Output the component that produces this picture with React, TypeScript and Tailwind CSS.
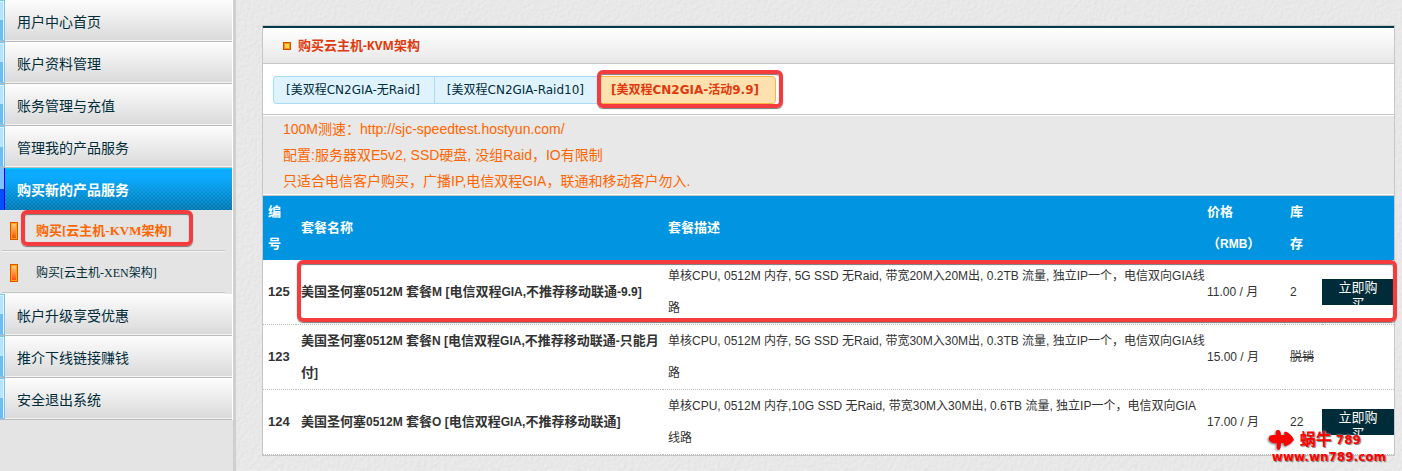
import React from 'react';

type Plan = {
  id: number;
  name: string;
  desc: string[];
  price: string;
  stock: number;
  marked?: boolean;
};

const plans: Plan[] = [
  {
    id: 125,
    name: '美国圣何塞0512M 套餐M [电信双程GIA,不推荐移动联通-9.9]',
    desc: ['单核CPU, 0512M 内存, 5G SSD 无Raid, 带宽20M入20M出, 0.2TB 流量, 独立IP一个，电信双向GIA线', '路'],
    price: '11.00 / 月',
    stock: 2,
    marked: true,
  },
  {
    id: 123,
    name: '美国圣何塞0512M 套餐N [电信双程GIA,不推荐移动联通-只能月付]',
    desc: ['单核CPU, 0512M 内存, 5G SSD 无Raid, 带宽30M入30M出, 0.3TB 流量, 独立IP一个，电信双向GIA线', '路'],
    price: '15.00 / 月',
    stock: 0,
  },
  {
    id: 124,
    name: '美国圣何塞0512M 套餐O [电信双程GIA,不推荐移动联通]',
    desc: ['单核CPU, 0512M 内存,10G SSD 无Raid, 带宽30M入30M出, 0.6TB 流量, 独立IP一个，电信双向GIA', '线路'],
    price: '17.00 / 月',
    stock: 22,
  },
];

const topMenu = ['用户中心首页', '账户资料管理', '账务管理与充值', '管理我的产品服务'];
const bottomMenu = ['帐户升级享受优惠', '推介下线链接赚钱', '安全退出系统'];

// bold titles set their latin parts one size below the chinese
const Mixed = ({ text }: { text: string }) => (
  <>
    {text.split(/([\x20-\x7e]+)/).map((part, i) =>
      i % 2 ? (
        <span key={i} className="text-xs leading-[inherit]">
          {part}
        </span>
      ) : (
        part
      )
    )}
  </>
);

const Marker = ({ className }: { className: string }) => (
  <span
    className={`absolute pointer-events-none border-4 border-[#f43b3d] rounded-md shadow-[0_1px_1px_#777,inset_0_1px_1px_#777] ${className}`}
  />
);

const MenuItem = ({ label }: { label: string }) => (
  <a
    href="#"
    className="flex h-[42px] border-b border-[#bababa] bg-linear-to-b from-[#fdfdfd] to-[#d9d9d9] text-sm text-[#012c3a]"
  >
    <span className="w-[5px] border-y border-r border-[#78c4f2] bg-linear-to-b from-[#b4e4ff] from-50% to-[#6dbdf0] to-50% shadow-[inset_-1px_1px_0_#dcf4ff]" />
    <span className="flex-1 pl-3 leading-[44px] border-b border-[#f4f4f4]">{label}</span>
  </a>
);

const SubItem = ({ label, active }: { label: string; active?: boolean }) => (
  <a
    href="#"
    className={`relative flex items-center h-[42px] pl-[10px] pb-px font-['Liberation_Serif','Noto_Sans_CJK_SC',serif] ${
      active ? 'text-[13px] font-bold text-[#ff6600]' : 'text-xs text-[#012c3a]'
    }`}
  >
    <span className="w-2 h-[18px] border border-[#f04a00] bg-linear-to-b from-[#ffd08a] via-[#ff9140] to-[#ff3c00] shadow-[inset_0_0_0_1px_#ffb000]" />
    <span className="pl-[18px] whitespace-nowrap">{label}</span>
    <span className="absolute left-[2px] right-[7px] bottom-0 h-[2px] border-t border-[#c6c6c6] bg-[#f6f6f6]" />
    {active && <Marker className="left-[21px] top-0 w-[172px] h-9" />}
  </a>
);

const Sidebar = () => (
  <nav className="w-[236px] shrink-0 bg-[#e4e4e4] border-r-[3px] border-[#cfcfcf]">
    <div className="border-r border-white">
      {topMenu.map((label) => (
        <MenuItem key={label} label={label} />
      ))}
      <a href="#" className="flex h-[42px] text-sm font-bold text-white">
        <span className="w-[5px] border-r border-[#0000ff] bg-linear-to-b from-[#7cc4ff] from-50% to-[#0050ff] to-50%" />
        <span className="flex-1 pl-3 leading-[42px] border-t border-[#00d2ff] bg-[linear-gradient(#0cabff_20%,#0cabff00),repeating-conic-gradient(#0670a6_0_25%,#0a8cc6_0_50%)] bg-[length:100%_100%,4px_4px]">
          购买新的产品服务
        </span>
      </a>
      <SubItem label="购买[云主机-KVM架构]" active />
      <SubItem label="购买[云主机-XEN架构]" />
      {bottomMenu.map((label) => (
        <MenuItem key={label} label={label} />
      ))}
    </div>
  </nav>
);

const tabClass =
  'h-7 pl-3 pr-[14px] border-y border-[#a6dcf9] bg-[#dff3ff] text-xs text-[#012c3a] whitespace-nowrap';

const Tabs = () => (
  <div className="flex px-[10px] pt-3 pb-[10px] bg-white border-b border-[#c6c6c6] font-['DejaVu_Sans','Noto_Sans_CJK_SC',sans-serif]">
    <button className={`${tabClass} border-l rounded-l`}>[美双程CN2GIA-无Raid]</button>
    <button className={`${tabClass} border-l`}>[美双程CN2GIA-Raid10]</button>
    <button className="relative h-7 pl-3 pr-4 border border-[#ffb640] rounded-r bg-[#ffe1b0] text-xs font-bold text-[#e03a0c] whitespace-nowrap">
      [美双程CN2GIA-活动9.9]
      <Marker className="-left-0.5 -right-2 -top-[7px] h-[38px]" />
    </button>
  </div>
);

const PlanRow = ({ plan }: { plan: Plan }) => (
  <tr className="relative border-b border-dotted border-[#bbb]">
    <td className="pl-[5px] text-[13px] leading-8 font-bold">{plan.id}</td>
    <td className="pl-[5px] text-[13px] leading-8 font-bold">
      <Mixed text={plan.name} />
    </td>
    <td className="pl-[5px] whitespace-nowrap">
      {plan.desc[0]}
      <br />
      {plan.desc[1]}
    </td>
    <td className="pl-[5px] whitespace-nowrap">{plan.price}</td>
    <td className="pl-[5px] whitespace-nowrap">{plan.stock > 0 ? plan.stock : <s>脱销</s>}</td>
    <td>
      {plan.stock > 0 && (
        <button className="block w-full h-[26px] overflow-hidden bg-[#002b38] text-[13px] leading-4 text-white">
          <span className="block h-[26px] px-4 pt-px">立即购买</span>
        </button>
      )}
      {plan.marked && <Marker className="left-[34px] -right-[3px] top-0 h-[62px]" />}
    </td>
  </tr>
);

// embossed paper grain behind the content
const Grain = () => (
  <svg className="absolute inset-0 -z-10 w-full h-full" aria-hidden="true">
    <filter id="grain" x="0" y="0" width="100%" height="100%" colorInterpolationFilters="sRGB">
      <feTurbulence type="fractalNoise" baseFrequency="0.3" numOctaves="3" result="noise" />
      <feDiffuseLighting in="noise" lightingColor="#f8f8f8" surfaceScale="0.55" diffuseConstant="1.09">
        <feDistantLight azimuth="225" elevation="60" />
      </feDiffuseLighting>
    </filter>
    <rect width="100%" height="100%" fill="#e8e8e8" />
    <rect width="100%" height="100%" filter="url(#grain)" opacity="0.18" />
  </svg>
);

const Watermark = () => (
  <div className="absolute right-4 bottom-2 font-['DejaVu_Sans','Noto_Sans_CJK_SC',sans-serif] font-bold text-[#ff0000] leading-none [text-shadow:1px_1px_1px_#777,0_0_2px_#fff]">
    <div className="flex items-center gap-1 h-[22px] -ml-1">
      <svg className="drop-shadow-[-1px_1px_1px_#777]" width="28" height="22" viewBox="0 0 28 22" fill="#f00">
        <path d="M1 9q0-3 4-3l3 0q-1-5 2-5 3 0 3 5l4 0-1-2q1-2 3-1 5 3 7 8-3 4-8 6-3 0-2-3l-3 0q0 6-2 7-3 0-2-7-3 1-6-1-3-2-2-4z" />
      </svg>
      <span className="text-base leading-none">蜗牛</span>
      <span className="text-xs">789</span>
    </div>
    <div className="text-xs leading-3">www.wn789.com</div>
  </div>
);

const App = () => {
  return (
    <div className="relative flex min-h-screen overflow-hidden font-['Liberation_Sans','Noto_Sans_CJK_SC',sans-serif]">
      <Sidebar />
      <main className="relative isolate flex-1 min-w-0 pt-[25px] pl-[26px] pr-[7px] bg-[#e8e8e8]">
        <Grain />
        <section className="border border-[#c6c6c6] bg-white">
          <h1 className="flex items-center h-[38px] pl-5 border-t-2 border-t-[#003c4c] border-b border-b-[#c6c6c6] bg-linear-to-b from-white to-[#e8e8e8] font-['Noto_Sans','Noto_Sans_CJK_SC',sans-serif] text-[13px] font-bold text-[#e03a0c]">
            <span className="w-2 h-2 mr-[7px] border border-[#d84800] bg-[#ffcf60] shadow-[inset_0_0_0_1px_#ff9800]" />
            <span>
              <Mixed text="购买云主机-KVM架构" />
            </span>
          </h1>
          <Tabs />
          <div className="pl-5 border-y border-white bg-[#e8e8e8] text-sm leading-[26px] text-[#ff6600]">
            <p>100M测速：http://sjc-speedtest.hostyun.com/</p>
            <p>配置:服务器双E5v2, SSD硬盘, 没组Raid，IO有限制</p>
            <p>只适合电信客户购买，广播IP,电信双程GIA，联通和移动客户勿入.</p>
          </div>
          <table className="w-full table-fixed border-t border-[#c6c6c6] border-collapse text-left text-xs leading-8 text-[#333]">
            <colgroup>
              <col className="w-[33px]" />
              <col className="w-[367px]" />
              <col />
              <col className="w-[83px]" />
              <col className="w-[37px]" />
              <col className="w-[72px]" />
            </colgroup>
            <thead className="bg-[#0094e1] text-[13px] leading-8 text-white">
              <tr>
                <th className="pl-[5px] pr-3">编号</th>
                <th className="pl-[5px]">套餐名称</th>
                <th className="pl-[5px]">套餐描述</th>
                <th className="pl-[5px]">
                  价格
                  <br />
                  <Mixed text="（RMB）" />
                </th>
                <th className="pl-[5px] pr-3">库存</th>
                <th />
              </tr>
            </thead>
            <tbody>
              {plans.map((plan) => (
                <PlanRow key={plan.id} plan={plan} />
              ))}
            </tbody>
          </table>
        </section>
      </main>
      <Watermark />
    </div>
  );
};

export default App;
